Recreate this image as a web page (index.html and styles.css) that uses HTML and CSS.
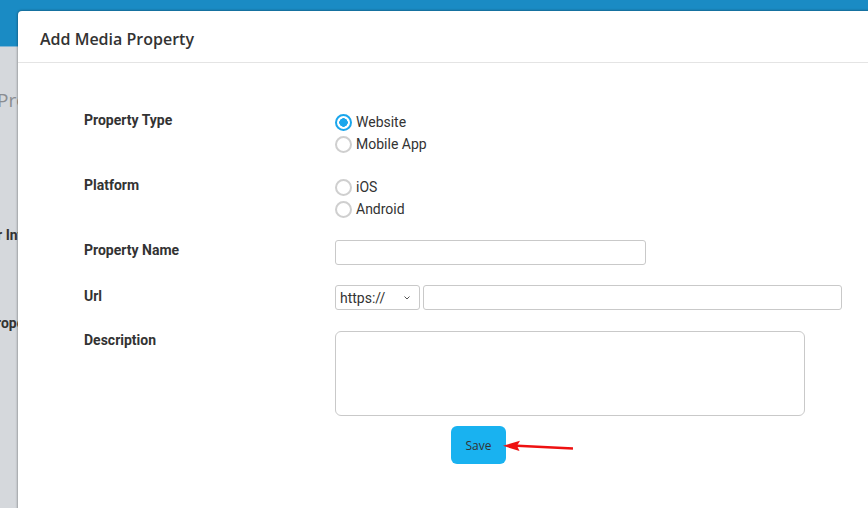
FILE: index.html
```html
<!DOCTYPE html>
<html lang="en">

<head>
    <meta charset="UTF-8">
    <meta name="viewport" content="width=device-width, initial-scale=1.0">
    <title>Add Media Property</title>
    <link rel="stylesheet" href="styles.css">
</head>

<body>
    <div class="topbar"></div>
    <div class="page">
        <h2 class="page-title">Properties</h2>
        <p class="page-label label-one">Partner Info</p>
        <p class="page-label label-two">Property</p>
    </div>

    <div class="modal">
        <div class="modal-header">Add Media Property</div>
        <form class="modal-body" onsubmit="return false;">
            <div class="row">
                <div class="field-label">Property Type</div>
                <div class="field">
                    <label class="radio"><input type="radio" name="type" checked>Website</label>
                    <label class="radio"><input type="radio" name="type">Mobile App</label>
                </div>
            </div>
            <div class="row platform-row">
                <div class="field-label">Platform</div>
                <div class="field">
                    <label class="radio"><input type="radio" name="platform">iOS</label>
                    <label class="radio"><input type="radio" name="platform">Android</label>
                </div>
            </div>
            <div class="row name-row">
                <div class="field-label">Property Name</div>
                <div class="field">
                    <input type="text" class="text-input name-input">
                </div>
            </div>
            <div class="row">
                <div class="field-label url-label">Url</div>
                <div class="field url-field">
                    <div class="select">https://
                        <svg width="8" height="6" viewBox="0 0 8 6"><path d="M1.5 1.5 L4 4 L6.5 1.5" fill="none" stroke="#555" stroke-width="1"/></svg>
                    </div>
                    <input type="text" class="text-input url-input">
                </div>
            </div>
            <div class="row desc-row">
                <div class="field-label desc-label">Description</div>
                <div class="field">
                    <textarea class="text-input desc-input"></textarea>
                </div>
            </div>
            <div class="row">
                <div class="field-label"></div>
                <div class="field">
                    <button class="save-btn">Save</button>
                </div>
            </div>
        </form>
        <!-- annotation arrow pointing at Save -->
        <svg class="arrow" width="80" height="16" viewBox="0 0 80 16">
            <path d="M70 8.5 L14 5.8" stroke="#ee1111" stroke-width="2.4" fill="none"/>
            <path d="M0 5.8 L17 0.8 L14 5.8 L16.5 11 Z" fill="#ee1111"/>
        </svg>
    </div>
</body>

</html>
```

FILE: styles.css
```css
body {
    margin: 0;
    background: #d5d8dc;
    font-family: Roboto, "Liberation Sans", sans-serif;
    color: #333;
    overflow: hidden;
    height: 508px;
}

.topbar {
    height: 46px;
    background: #1a8bc4;
    border-bottom: 1px solid #7fb4d4;
}

.page {
    padding-top: 40px;
    margin-left: -3px;
}

.page-title {
    margin: 0;
    font-family: "Open Sans", sans-serif;
    font-weight: 400;
    font-size: 19px;
    color: #8a8d91;
}

.page-label {
    margin: 0;
    font-size: 14px;
    font-weight: 700;
    color: #333;
}

.label-one {
    margin-top: 114px;
    margin-left: -42px;
}

.label-two {
    margin-top: 72px;
    margin-left: -10px;
}

.modal {
    position: absolute;
    left: 18px;
    top: 11px;
    width: 900px;
    height: 560px;
    background: #fff;
    border-radius: 4px;
    box-shadow: 0 0 2px 1px rgba(0, 0, 0, 0.25);
}

.modal-header {
    height: 51px;
    padding-left: 22px;
    line-height: 57px;
    font-family: "Open Sans", sans-serif;
    font-size: 16px;
    font-weight: 600;
    color: #333;
    border-bottom: 1px solid #e4e4e4;
}

.modal-body {
    padding: 47px 0 0 66px;
    display: flex;
    flex-direction: column;
    gap: 20px;
}

.row {
    display: grid;
    grid-template-columns: 251px 1fr;
}

.platform-row,
.name-row,
.desc-row {
    margin-top: 1px;
}

.field-label {
    font-size: 14px;
    font-weight: 700;
    line-height: 20px;
    color: #333;
}

.url-label {
    padding-top: 1px;
}

.desc-label {
    margin-top: -1px;
}

.field {
    display: flex;
    flex-direction: column;
}

.radio {
    display: flex;
    align-items: center;
    height: 22px;
    font-size: 14px;
    color: #333;
    margin-top: 1px;
    margin-bottom: -1px;
}

.radio input {
    appearance: none;
    width: 17px;
    height: 17px;
    margin: 0 4px 0 0;
    border: 2px solid #cfcfcf;
    border-radius: 50%;
    background: #fff;
}

.radio input:checked {
    border-color: #1aa6ec;
    background: radial-gradient(circle, #1aa6ec 0 4px, #fff 4.5px);
}

.text-input {
    border: 1px solid #c9c9c9;
    border-radius: 3px;
    background: #fff;
    box-sizing: border-box;
    margin: 0;
    padding: 0 6px;
    font-family: inherit;
}

.name-input {
    width: 311px;
    height: 25px;
}

.url-field {
    flex-direction: row;
    gap: 3px;
}

.select {
    width: 85px;
    height: 25px;
    box-sizing: border-box;
    border: 1px solid #c9c9c9;
    border-radius: 3px;
    padding: 0 8px 0 4px;
    display: flex;
    align-items: center;
    justify-content: space-between;
    font-size: 14px;
    color: #333;
}

.url-input {
    width: 419px;
    height: 25px;
}

.desc-input {
    width: 470px;
    height: 85px;
    border-radius: 6px;
    resize: none;
}

.save-btn {
    width: 55px;
    height: 38px;
    margin: -10px 0 0 116px;
    border: none;
    border-radius: 6px;
    background: #19b2f0;
    color: #333;
    font-family: "Open Sans", sans-serif;
    font-size: 12px;
    cursor: pointer;
}

.arrow {
    position: absolute;
    left: 485px;
    top: 429px;
}
```
